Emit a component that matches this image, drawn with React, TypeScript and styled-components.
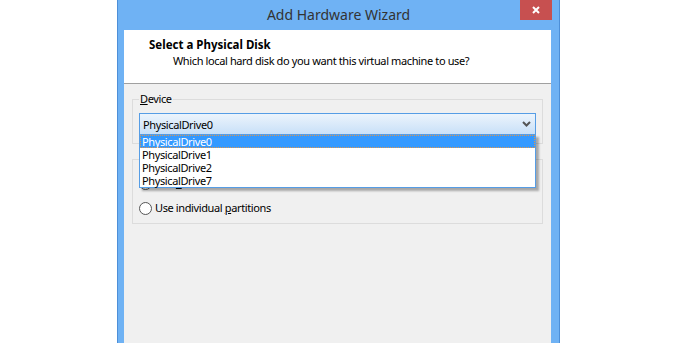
import styled, { createGlobalStyle } from "styled-components";

const GlobalStyle = createGlobalStyle`
    html, body {
        margin: 0;
        padding: 0;
        background: #ffffff;
    }

    body {
        width: 677px;
        height: 343px;
        overflow: hidden;
        font-family: "Noto Sans", "Open Sans", sans-serif;
        font-size: 11px;
        letter-spacing: -0.38px;
        color: #000000;
    }
`;

const Page = styled.div`
    height: 343px;
    padding-left: 117px;
    overflow: hidden;
`;

const Window = styled.div`
    width: 443px;
    height: 343px;
    box-sizing: border-box;
    background: #6fb2f4;
    border-left: 1px solid #4d8fd8;
    border-right: 1px solid #4d8fd8;
    display: flex;
    flex-direction: column;
`;

const TitleBar = styled.div`
    height: 30px;
    flex-shrink: 0;
    display: grid;
    grid-template-columns: 1fr auto 1fr;
`;

const Title = styled.div`
    grid-column: 2;
    font-size: 14px;
    letter-spacing: 0;
    line-height: 30px;
    color: #333333;
`;

const CloseButton = styled.div`
    grid-column: 3;
    justify-self: end;
    align-self: start;
    width: 32px;
    height: 20px;
    margin-right: 7px;
    background: #c75050;
    display: flex;
    align-items: center;
    justify-content: center;
`;

const Client = styled.div`
    flex: 1;
    margin: 0 8px 0 6px;
    background: #f0f0f0;
    display: flex;
    flex-direction: column;
`;

const Header = styled.div`
    height: 54px;
    box-sizing: border-box;
    background: #ffffff;
    border-bottom: 1px solid #a0a0a0;
    padding: 7px 0 0 25px;
`;

const HeaderTitle = styled.div`
    font-weight: 700;
    font-size: 11.5px;
    letter-spacing: 0;
    line-height: 16px;
`;

const HeaderSubtitle = styled.div`
    padding-left: 24px;
    line-height: 16px;
`;

const Body = styled.div`
    padding: 7px 8px 0 8px;
    display: flex;
    flex-direction: column;
    gap: 15px;
`;

const GroupBox = styled.fieldset<{ $pad: string }>`
    margin: 0;
    min-width: 0;
    border: 1px solid #dcdcdc;
    padding: ${(p) => p.$pad};
`;

const Legend = styled.legend`
    padding: 0 1px;
    line-height: 16px;
`;

const Combo = styled.div`
    position: relative;
    height: 22px;
    box-sizing: border-box;
    border: 1px solid #569de5;
    background: linear-gradient(#ecf4fc, #c8e0f8);
    display: flex;
    align-items: center;
    justify-content: space-between;
    padding: 0 4px 0 3px;
`;

const DropList = styled.div`
    position: absolute;
    top: 100%;
    left: -1px;
    right: -1px;
    border: 1px solid #569de5;
    background: #ffffff;
    box-shadow: 3px 3px 2px rgba(0, 0, 0, 0.3);
    z-index: 5;
`;

const ListItem = styled.div<{ $active?: boolean }>`
    height: 13px;
    line-height: 13px;
    padding-left: 2px;
    background: ${(p) => (p.$active ? "#3399ff" : "transparent")};
    color: ${(p) => (p.$active ? "#ffffff" : "#000000")};
    outline: ${(p) => (p.$active ? "1px dotted #e0964a" : "none")};
    outline-offset: -1px;
`;

const RadioList = styled.div`
    display: flex;
    flex-direction: column;
    gap: 9px;
`;

const RadioRow = styled.label`
    display: flex;
    align-items: center;
    gap: 3px;
    height: 16px;
    line-height: 16px;
`;

const RadioCircle = styled.span`
    width: 13px;
    height: 13px;
    box-sizing: border-box;
    border: 1px solid #555555;
    border-radius: 50%;
    background: #ffffff;
`;

const drives = ["PhysicalDrive0", "PhysicalDrive1", "PhysicalDrive2", "PhysicalDrive7"];

const App = () => {
    return (
        <Page>
            <GlobalStyle />
            <Window>
                <TitleBar>
                    <Title>Add Hardware Wizard</Title>
                    <CloseButton>
                        <svg width="8" height="8" viewBox="0 0 8 8">
                            <path d="M1 1 L7 7 M7 1 L1 7" stroke="#ffffff" strokeWidth="2" />
                        </svg>
                    </CloseButton>
                </TitleBar>
                <Client>
                    <Header>
                        <HeaderTitle>Select a Physical Disk</HeaderTitle>
                        <HeaderSubtitle>Which local hard disk do you want this virtual machine to use?</HeaderSubtitle>
                    </Header>
                    <Body>
                        <GroupBox $pad="6px 6px 8px">
                            <Legend><u>D</u>evice</Legend>
                            <Combo>
                                <span>PhysicalDrive0</span>
                                <svg width="9" height="6" viewBox="0 0 9 6">
                                    <path d="M1 1 L4.5 4.5 L8 1" stroke="#555555" strokeWidth="2" fill="none" />
                                </svg>
                                <DropList>
                                    {drives.map((d, i) => (
                                        <ListItem key={d} $active={i === 0}>{d}</ListItem>
                                    ))}
                                </DropList>
                            </Combo>
                        </GroupBox>
                        <GroupBox $pad="15px 6px 7px">
                            <RadioList>
                                <RadioRow>
                                    <RadioCircle />
                                    <span>Use <u>e</u>ntire disk</span>
                                </RadioRow>
                                <RadioRow>
                                    <RadioCircle />
                                    <span>Use individual <u>p</u>artitions</span>
                                </RadioRow>
                            </RadioList>
                        </GroupBox>
                    </Body>
                </Client>
            </Window>
        </Page>
    );
};

export default App;
